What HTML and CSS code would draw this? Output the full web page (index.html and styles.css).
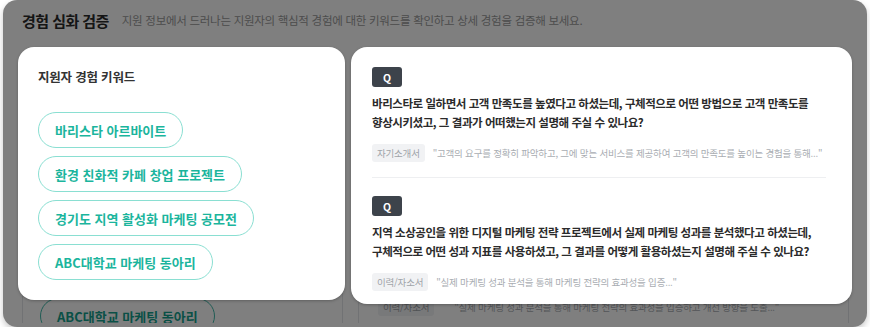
FILE: index.html
```html
<!DOCTYPE html>
<html lang="ko">

<head>
    <meta charset="UTF-8" />
    <meta name="viewport" content="width=device-width, initial-scale=1.0" />
    <title>경험 심화 검증</title>
    <link rel="stylesheet" href="styles.css">
</head>

<body>
    <div class="frame">
        <header class="head">
            <h1 class="head-title">경험 심화 검증</h1>
            <p class="head-desc">지원 정보에서 드러나는 지원자의 핵심적 경험에 대한 키워드를 확인하고 상세 경험을 검증해 보세요.</p>
        </header>

        <div class="board">
            <section class="col col-keywords">
                <!-- page underneath the guide overlay, only its lower edge shows -->
                <div class="base-card base-keywords">
                    <span class="chip">ABC대학교 마케팅 동아리</span>
                </div>
                <!-- highlighted card above the overlay -->
                <div class="spot-card spot-keywords">
                    <h2 class="card-title">지원자 경험 키워드</h2>
                    <ul class="chips">
                        <li class="chip">바리스타 아르바이트</li>
                        <li class="chip">환경 친화적 카페 창업 프로젝트</li>
                        <li class="chip">경기도 지역 활성화 마케팅 공모전</li>
                        <li class="chip">ABC대학교 마케팅 동아리</li>
                    </ul>
                </div>
            </section>

            <section class="col col-questions">
                <div class="base-card base-questions">
                    <div class="source"><span class="source-tag">이력/자소서</span><span class="source-quote base-quote">"실제 마케팅 성과 분석을 통해 마케팅 전략의 효과성을 입증하고 개선 방향을 도출..."</span></div>
                </div>
                <div class="spot-card spot-questions">
                    <div class="question">
                        <span class="q-badge">Q</span>
                        <p class="q-text">바리스타로 일하면서 고객 만족도를 높였다고 하셨는데, 구체적으로 어떤 방법으로 고객 만족도를 향상시키셨고, 그 결과가 어떠했는지 설명해 주실 수 있나요?</p>
                        <div class="source"><span class="source-tag">자기소개서</span><span class="source-quote">"고객의 요구를 정확히 파악하고, 그에 맞는 서비스를 제공하여 고객의 만족도를 높이는 경험을 통해..."</span></div>
                    </div>
                    <div class="question">
                        <span class="q-badge">Q</span>
                        <p class="q-text">지역 소상공인을 위한 디지털 마케팅 전략 프로젝트에서 실제 마케팅 성과를 분석했다고 하셨는데, 구체적으로 어떤 성과 지표를 사용하셨고, 그 결과를 어떻게 활용하셨는지 설명해 주실 수 있나요?</p>
                        <div class="source"><span class="source-tag">이력/자소서</span><span class="source-quote">"실제 마케팅 성과 분석을 통해 마케팅 전략의 효과성을 입증..."</span></div>
                    </div>
                </div>
            </section>
        </div>

        <div class="dim"></div>
    </div>
</body>

</html>
```

FILE: styles.css
```css
* {
    box-sizing: border-box;
}

body {
    margin: 0;
    background-color: #fff;
    font-family: "Noto Sans CJK KR", "Noto Sans", sans-serif;
    color: #333;
    word-break: keep-all;
}

h1,
h2,
p,
ul {
    margin: 0;
    padding: 0;
}

.frame {
    position: relative;
    margin: 0 3px;
    padding-bottom: 4px;
    background-color: #fff;
    border-radius: 14px;
    box-shadow: 0 3px 6px rgba(0, 0, 0, 0.22);
}

.dim {
    position: absolute;
    inset: 0;
    z-index: 1;
    border-radius: inherit;
    background-color: rgba(0, 0, 0, 0.5);
}

.head {
    display: flex;
    align-items: center;
    gap: 13px;
    height: 50px;
    padding: 0 19px 10px;
}

.head-title {
    font-size: 15px;
    font-weight: 700;
    letter-spacing: -0.55px;
    color: #2a2a2a;
    white-space: nowrap;
}

.head-desc {
    font-size: 11.5px;
    letter-spacing: -0.28px;
    color: #9a9a9a;
    white-space: nowrap;
}

.board {
    display: grid;
    grid-template-columns: 321px 491px;
    gap: 15px;
    padding: 0 19px;
}

.col {
    position: relative;
}

.base-card {
    height: 273px;
    overflow: hidden;
    background-color: #fff;
    border: 1px solid #e2e4e8;
    border-bottom: 0;
    border-radius: 16px 16px 0 0;
}

.base-keywords {
    padding: 247px 17px 0;
}

.base-keywords .chip {
    display: inline-flex;
    border-color: #3fb8a9;
    color: #14a08c;
}

.base-questions {
    padding: 247px 19px 0;
}

.base-questions .source {
    margin-top: 0;
    gap: 20px;
}

.base-quote {
    color: #9aa0a6;
}

.spot-card {
    position: absolute;
    top: -3px;
    z-index: 2;
    background-color: #fff;
    border-radius: 16px;
    box-shadow: 0 1px 3px rgba(0, 0, 0, 0.25);
}

.spot-keywords {
    left: -4px;
    right: -2px;
    padding: 21px 20px 20px;
}

.spot-questions {
    left: -7px;
    right: -3px;
    padding: 20px 26px 13px 21px;
}

.card-title {
    font-size: 12.5px;
    font-weight: 700;
    line-height: 18px;
    letter-spacing: -0.2px;
    color: #333;
}

.chips {
    list-style: none;
    display: flex;
    flex-direction: column;
    align-items: flex-start;
    gap: 8px;
    margin-top: 26px;
}

.chip {
    height: 36px;
    display: flex;
    align-items: center;
    padding: 0 16px;
    border: 1.5px solid #8adfd2;
    border-radius: 18px;
    font-size: 13px;
    font-weight: 700;
    letter-spacing: 0;
    color: #1bb59d;
    white-space: nowrap;
}

.question+.question {
    margin-top: 15px;
    padding-top: 18px;
    border-top: 1px solid #eeeff1;
}

.q-badge {
    display: flex;
    align-items: center;
    justify-content: center;
    width: 30px;
    height: 20px;
    border-radius: 3px;
    background-color: #3d434b;
    color: #fff;
    font-size: 10.5px;
    font-weight: 700;
}

.q-text {
    margin-top: 7px;
    font-size: 11.5px;
    font-weight: 700;
    line-height: 19px;
    letter-spacing: -0.45px;
    color: #2b2b2b;
}

.source {
    display: flex;
    align-items: center;
    gap: 8px;
    margin-top: 12px;
    font-size: 9.5px;
    letter-spacing: -0.2px;
    white-space: nowrap;
}

.source-tag {
    padding: 2px 5px;
    border-radius: 3px;
    background-color: #f1f2f4;
    color: #a0a4a9;
}

.source-quote {
    color: #a9adb2;
}
```
